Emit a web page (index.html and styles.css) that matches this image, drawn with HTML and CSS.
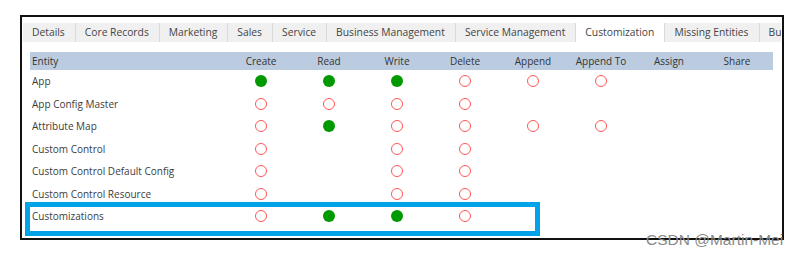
FILE: index.html
```html
<!DOCTYPE html>
<html lang="en">
<head>
    <meta charset="UTF-8">
    <title>Security Role - Customization</title>
    <link rel="stylesheet" href="styles.css">
</head>
<body>

<!-- 权限面板 -->
<div class="frame">
    <div class="tabs">
        <div class="tab">Details</div>
        <div class="tab">Core Records</div>
        <div class="tab">Marketing</div>
        <div class="tab">Sales</div>
        <div class="tab">Service</div>
        <div class="tab">Business Management</div>
        <div class="tab">Service Management</div>
        <div class="tab active">Customization</div>
        <div class="tab">Missing Entities</div>
        <div class="tab last">Bu</div>
    </div>

    <div class="content">
        <div class="grid head">
            <div class="name">Entity</div>
            <div>Create</div>
            <div>Read</div>
            <div>Write</div>
            <div>Delete</div>
            <div>Append</div>
            <div>Append To</div>
            <div>Assign</div>
            <div>Share</div>
        </div>

        <div class="grid row">
            <div class="name">App</div>
            <div><span class="dot on"></span></div>
            <div><span class="dot on"></span></div>
            <div><span class="dot on"></span></div>
            <div><span class="dot"></span></div>
            <div><span class="dot"></span></div>
            <div><span class="dot"></span></div>
            <div></div>
            <div></div>
        </div>
        <div class="grid row">
            <div class="name">App Config Master</div>
            <div><span class="dot"></span></div>
            <div><span class="dot"></span></div>
            <div><span class="dot"></span></div>
            <div><span class="dot"></span></div>
            <div></div>
            <div></div>
            <div></div>
            <div></div>
        </div>
        <div class="grid row">
            <div class="name">Attribute Map</div>
            <div><span class="dot"></span></div>
            <div><span class="dot on"></span></div>
            <div><span class="dot"></span></div>
            <div><span class="dot"></span></div>
            <div><span class="dot"></span></div>
            <div><span class="dot"></span></div>
            <div></div>
            <div></div>
        </div>
        <div class="grid row">
            <div class="name">Custom Control</div>
            <div><span class="dot"></span></div>
            <div></div>
            <div><span class="dot"></span></div>
            <div><span class="dot"></span></div>
            <div></div>
            <div></div>
            <div></div>
            <div></div>
        </div>
        <div class="grid row">
            <div class="name">Custom Control Default Config</div>
            <div><span class="dot"></span></div>
            <div></div>
            <div><span class="dot"></span></div>
            <div><span class="dot"></span></div>
            <div></div>
            <div></div>
            <div></div>
            <div></div>
        </div>
        <div class="grid row">
            <div class="name">Custom Control Resource</div>
            <div><span class="dot"></span></div>
            <div></div>
            <div><span class="dot"></span></div>
            <div><span class="dot"></span></div>
            <div></div>
            <div></div>
            <div></div>
            <div></div>
        </div>
        <div class="grid row">
            <div class="name">Customizations</div>
            <div><span class="dot"></span></div>
            <div><span class="dot on"></span></div>
            <div><span class="dot on"></span></div>
            <div><span class="dot"></span></div>
            <div></div>
            <div></div>
            <div></div>
            <div></div>
        </div>
    </div>

    <!-- 标注框 -->
    <div class="highlight"></div>
</div>

<!-- 水印 -->
<div class="watermark">CSDN @Martin-Mei</div>

</body>
</html>
```

FILE: styles.css
```css
/* 页面整体 */
body {
    margin: 0;
    background-color: #fff;
    font-family: "Open Sans", "Noto Sans", sans-serif;
    font-size: 10px;
    color: #3c3c3c;
}

/* 外框 */
.frame {
    position: relative;
    width: 760px;
    height: 221px;
    margin: 15px 0 0 20px;
    border: 2px solid #111;
    overflow: hidden;
}

/* 选项卡 */
.tabs {
    display: flex;
    height: 19px;
    margin: 6px 1px 0 1px;
    background-color: #f0f0f0;
    overflow: hidden;
    white-space: nowrap;
}
.tab {
    flex: none;
    padding: 0 10px 0 9px;
    font-size: 10.3px;
    line-height: 19px;
    border-right: 1px solid #dadada;
    color: #444;
}
.tab.active {
    background-color: #fff;
    border-left: 1px solid #dadada;
    margin-left: -1px;
}
.tab.last {
    border-right: none;
}

/* 表格 */
.content {
    padding: 10px 9px 0 8px;
}
.grid {
    display: grid;
    grid-template-columns: 197px repeat(8, 68px);
    align-items: center;
}
.grid > div {
    text-align: center;
    display: flex;
    justify-content: center;
    align-items: center;
}
.grid > .name {
    justify-content: flex-start;
    padding-left: 2px;
}
.head {
    height: 18px;
    background-color: #bccce0;
    color: #333;
}
.row {
    height: 22.5px;
}

/* 权限圆点 */
.dot {
    display: block;
    box-sizing: border-box;
    width: 12px;
    height: 12px;
    border-radius: 50%;
    border: 1.5px solid #ff5555;
}
.dot.on {
    border: none;
    background-color: #009a00;
}

/* 蓝色标注框 */
.highlight {
    position: absolute;
    left: 3px;
    top: 185px;
    width: 505px;
    height: 24px;
    border: 5px solid #00a2e8;
}

.watermark {
    position: absolute;
    left: 646px;
    top: 231px;
    font-family: "Liberation Sans", Arial, sans-serif;
    font-size: 15.5px;
    color: #8a8a8a;
}
```
